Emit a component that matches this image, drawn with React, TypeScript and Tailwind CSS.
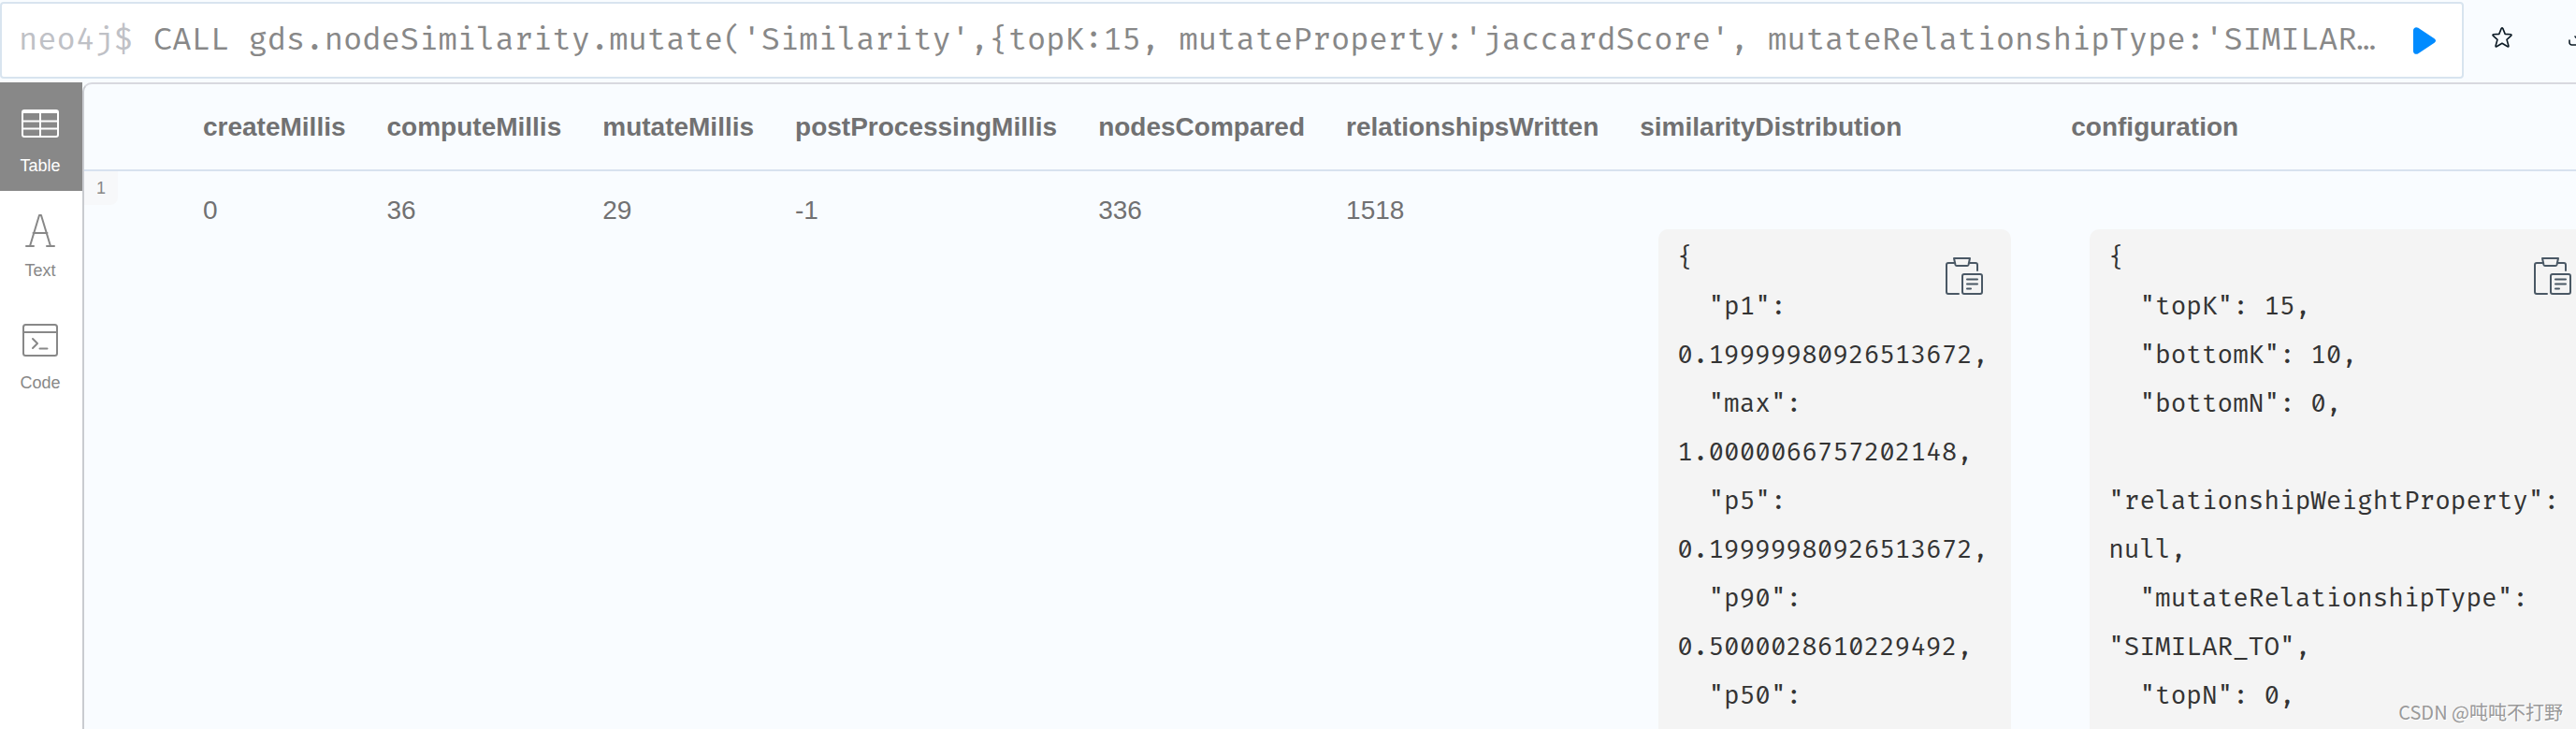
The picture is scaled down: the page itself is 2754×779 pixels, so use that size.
import { ReactNode } from "react";

const query =
  "CALL gds.nodeSimilarity.mutate('Similarity',{topK:15, mutateProperty:'jaccardScore', mutateRelationshipType:'SIMILAR…";

const similarityDistribution = `{
  "p1": 0.19999980926513672,
  "max": 1.0000066757202148,
  "p5": 0.19999980926513672,
  "p90": 0.5000028610229492,
  "p50": 0.2500009536743164
}`;

const configuration = `{
  "topK": 15,
  "bottomK": 10,
  "bottomN": 0,
  "relationshipWeightProperty": null,
  "mutateRelationshipType": "SIMILAR_TO",
  "topN": 0,
  "concurrency": 4
}`;

const metrics = [
  { name: "createMillis", value: "0" },
  { name: "computeMillis", value: "36" },
  { name: "mutateMillis", value: "29" },
  { name: "postProcessingMillis", value: "-1" },
  { name: "nodesCompared", value: "336" },
  { name: "relationshipsWritten", value: "1518" },
];

function TableIcon() {
  return (
    <svg className="w-10 h-10" viewBox="0 0 40 40" fill="none" stroke="currentColor">
      <rect x="1" y="6" width="38" height="28" rx="2" strokeWidth="2" />
      <path d="M1 7.5h38" strokeWidth="3" />
      <path d="M2 17.5h36M2 25.5h36M20 8v25" strokeWidth="2" />
    </svg>
  );
}

function TextIcon() {
  return (
    <svg className="w-10 h-9" viewBox="0 0 40 36" fill="none" stroke="currentColor" strokeWidth="2" strokeLinecap="round" strokeLinejoin="round">
      <path d="M9 35 19 2h2l10 33M12.5 21h15" />
      <path d="M5 35h8M27 35h8" />
    </svg>
  );
}

function CodeIcon() {
  return (
    <svg className="w-10 h-10" viewBox="0 0 40 40" fill="none" stroke="currentColor" strokeWidth="2" strokeLinecap="round" strokeLinejoin="round">
      <rect x="2" y="3" width="36" height="33" rx="2.5" />
      <path d="M2 11h36" />
      <path d="m12 18 5 5-5 5M19.5 28.5h8" />
    </svg>
  );
}

function ClipboardIcon() {
  return (
    <svg className="w-10 h-10" viewBox="0 0 40 40" fill="none" stroke="currentColor" strokeWidth="2" strokeLinecap="round" strokeLinejoin="round">
      <path d="M9 6H3a2 2 0 0 0-2 2v29a2 2 0 0 0 2 2h11M26 6h6a2 2 0 0 1 2 2v6" />
      <path d="M9 1h17l-1.5 7a1.5 1.5 0 0 1-1.5 1H12a1.5 1.5 0 0 1-1.5-1z" />
      <rect x="18" y="18" width="21" height="21" rx="2" />
      <path d="M23 23.5h11M23 28.5h11M23 33.5h4" />
    </svg>
  );
}

function ViewTab({ label, active, children }: { label: string; active?: boolean; children: ReactNode }) {
  return (
    <button
      className={`flex flex-col items-center w-full h-[116px] pt-6 pr-[2px] gap-[15px] text-lg leading-5 ${
        active ? "bg-[#888888] text-white" : "text-[#888888]"
      }`}
    >
      {children}
      <span>{label}</span>
    </button>
  );
}

function JsonCard({ json, width }: { json: string; width: string }) {
  return (
    <div className={`relative mx-5 mt-10 px-5 py-[5px] rounded-[10px] bg-[#f4f4f4] ${width}`}>
      <pre className="font-['Fira_Code','Liberation_Mono',monospace] text-[27px] leading-[52px] whitespace-pre-wrap text-[#333333]">
        {json}
      </pre>
      <button aria-label="Copy" className="absolute top-[30px] right-[30px] text-[#4a5865]">
        <ClipboardIcon />
      </button>
    </div>
  );
}

export default function App() {
  return (
    <div className="relative flex flex-col h-screen overflow-hidden bg-[#f9fcff] font-['Liberation_Sans',Arial,sans-serif]">
      <header className="flex items-center gap-[30px] shrink-0 pt-[2px] pb-1">
        <div className="flex items-center flex-1 h-[82px] pl-[18px] pr-7 bg-white border-2 border-[#d8e4ef] rounded-[4px]">
          <label htmlFor="query" className="pt-[2px] mr-[22px] font-['Fira_Code','Liberation_Mono',monospace] text-[33px] text-[#bfc1c6]">
            neo4j$
          </label>
          <input
            id="query"
            readOnly
            value={query}
            className="flex-1 min-w-0 pt-[2px] bg-transparent outline-none font-['Fira_Code','Liberation_Mono',monospace] text-[33px] text-[#888888]"
          />
          <button aria-label="Run" className="text-[#018bff]">
            <svg className="w-6 h-[29px]" viewBox="0 0 24 29" fill="currentColor">
              <path d="M0 3.5C0 .6 3-.8 5.3.8l17.300 11.500c1.900 1.300 1.900 3.100 0 4.400L5.300 28.200C3 29.800 0 28.400 0 25.500z" />
            </svg>
          </button>
        </div>
        <div className="flex gap-[60px] -mr-4 pb-[6px] text-[#0c1a25]">
          <button aria-label="Save as favorite">
            <svg className="w-[22px] h-[22px]" viewBox="0 0 22 22" fill="none" stroke="currentColor" strokeWidth="1.6" strokeLinejoin="round">
              <path d="M10.200 1.400q.8-1.200 1.600 0l2.400 6 6.100.4q1.200.3.400 1.300l-4.700 4.200 1.900 6.700q.1 1.200-1 .8L11 17.300l-5.900 3.500q-1.100.4-1-.8L6 13.300 1.300 9.100q-.8-1 .4-1.300l6.100-.4z" />
            </svg>
          </button>
          <button aria-label="Download">
            <svg className="w-6 h-6" viewBox="0 0 24 24" fill="none" stroke="currentColor" strokeWidth="1.6" strokeLinecap="round" strokeLinejoin="round">
              <path d="M1 15v2.500A2.500 2.500 0 0 0 3.500 20h17a2.500 2.500 0 0 0 2.500-2.500V15M12 1v14M7 11l5 5 5-5" />
            </svg>
          </button>
        </div>
      </header>

      <div className="flex flex-1 min-h-0">
        <nav className="w-[88px] shrink-0 bg-white">
          <ViewTab label="Table" active>
            <TableIcon />
          </ViewTab>
          <ViewTab label="Text">
            <TextIcon />
          </ViewTab>
          <ViewTab label="Code">
            <CodeIcon />
          </ViewTab>
        </nav>

        <main className="flex-1 min-w-0 overflow-hidden border-t-2 border-l-2 border-t-[#d8d9df] border-l-[#c9cbd0] rounded-tl-[10px]">
          <table className="w-max border-collapse text-[28px] leading-10 text-left text-[#717172]">
            <thead>
              <tr className="h-[92px] border-b-2 border-[#d8e2ef]">
                <th className="w-[105px]" />
                {metrics.map((m) => (
                  <th key={m.name} className="px-[22px] font-bold">{m.name}</th>
                ))}
                <th className="px-[22px] font-bold">similarityDistribution</th>
                <th className="px-[22px] font-bold">configuration</th>
              </tr>
            </thead>
            <tbody>
              <tr className="align-top">
                <td>
                  <div className="w-9 h-9 rounded-br-lg bg-[#f7f8fa] text-center text-lg leading-9 text-[#888888]">1</div>
                </td>
                {metrics.map((m) => (
                  <td key={m.name} className="px-[22px] pt-[22px]">{m.value}</td>
                ))}
                <td className="px-[22px] pt-[22px]">
                  <JsonCard json={similarityDistribution} width="w-[377px]" />
                </td>
                <td className="px-[22px] pt-[22px]">
                  <JsonCard json={configuration} width="w-[545px]" />
                </td>
              </tr>
            </tbody>
          </table>
        </main>
      </div>

      <div className="absolute right-[14px] bottom-1 font-['Noto_Sans_CJK_SC',sans-serif] text-xl leading-7 text-[#999999] [text-shadow:1px_1px_0_white]">
        CSDN @吨吨不打野
      </div>
    </div>
  );
}
